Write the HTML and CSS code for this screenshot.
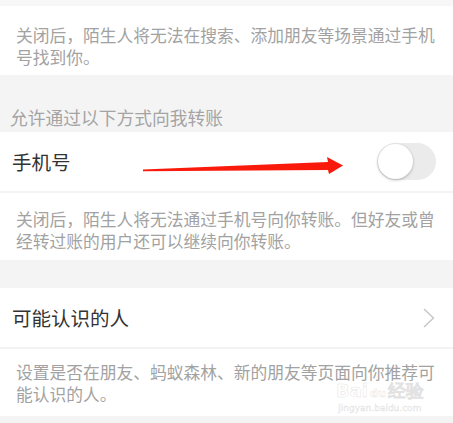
FILE: index.html
```html
<!DOCTYPE html>
<html lang="zh">
<head>
<meta charset="utf-8">
<link rel="stylesheet" href="styles.css">
</head>
<body>
<div class="page">
  <div class="top-gap"></div>
  <div class="desc desc-first">关闭后，陌生人将无法在搜索、添加朋友等场景通过手机号找到你。</div>
  <div class="section-title">允许通过以下方式向我转账</div>
  <div class="row">
    <span class="row-label">手机号</span>
    <span class="switch"><span class="knob"></span></span>
  </div>
  <div class="desc desc-second">关闭后，陌生人将无法通过手机号向你转账。但好友或曾经转过账的用户还可以继续向你转账。</div>
  <div class="gap"></div>
  <div class="row">
    <span class="row-label">可能认识的人</span>
    <svg class="chevron" width="12" height="20" viewBox="0 0 12 20"><path d="M1 1 L10.5 10 L1 19" fill="none" stroke="#c6c6c6" stroke-width="1.4"/></svg>
  </div>
  <div class="desc desc-third">设置是否在朋友、蚂蚁森林、新的朋友等页面向你推荐可能认识的人。</div>
  <div class="bottom-gap"></div>

  <svg class="annot-arrow" width="453" height="423" viewBox="0 0 453 423">
    <polygon points="143,169.5 328,162 327,157 343,165.5 329,174 328,170 143,171.2" fill="#fa1a0c"/>
  </svg>
  <div class="watermark">
    <div class="wm-logo">Bai<span class="wm-du">du</span>经验</div>
    <div class="wm-url">jingyan.baidu.com</div>
  </div>
</div>
</body>
</html>
```

FILE: styles.css
```css
* { box-sizing: border-box; }
html, body { margin: 0; padding: 0; }
body {
  width: 453px;
  height: 423px;
  overflow: hidden;
  background: #f4f4f4;
  font-family: "Noto Sans CJK SC", "Noto Sans", sans-serif;
}
.page {
  position: relative;
  width: 453px;
  height: 423px;
  display: flex;
  flex-direction: column;
}
.top-gap { height: 6px; background: #f7f7f7; }
.desc {
  background: #fff;
  color: #a2a2a2;
  font-size: 16.75px;
  line-height: 22px;
  padding: 0 17px 0 16px;
}
.desc-first { height: 69px; padding-top: 18px; }
.section-title {
  height: 57px;
  display: flex;
  align-items: flex-end;
  padding: 0 0 0 10px;
  color: #a4a4a4;
  font-size: 17.75px;
  line-height: 30px;
}
.row {
  background: #fff;
  display: flex;
  align-items: center;
  justify-content: space-between;
  padding: 0 17px 0 12px;
  border-bottom: 2px solid #f3f3f3;
  height: 61px;
}
.row-label {
  color: #333;
  font-size: 19.5px;
}
.switch {
  position: relative;
  width: 59px;
  height: 37px;
  border-radius: 19px;
  background: #ebebeb;
  display: flex;
  align-items: center;
  padding: 1px;
}
.knob {
  width: 35px;
  height: 35px;
  border-radius: 50%;
  background: #fff;
  box-shadow: 0 1px 3px rgba(0,0,0,0.28);
}
.chevron { margin-right: 1px; }
.desc-second { height: 67px; padding-top: 15px; }
.gap { height: 28px; }
.desc-third { height: 67px; padding-top: 12px; }
.bottom-gap { flex: 1; }
.annot-arrow {
  position: absolute;
  left: 0;
  top: 0;
  pointer-events: none;
}
.watermark {
  position: absolute;
  left: 336px;
  top: 381px;
  text-align: center;
  font-family: "DejaVu Sans", sans-serif;
  color: rgba(255,255,255,0.55);
  -webkit-text-stroke: 0.5px rgba(190,190,190,0.45);
}
.wm-logo {
  font-size: 18px;
  line-height: 19px;
  font-weight: bold;
}
.wm-du {
  display: inline-block;
  font-size: 11px;
  margin: 0 2px;
}
.wm-url {
  font-size: 9px;
  line-height: 11px;
}
```
